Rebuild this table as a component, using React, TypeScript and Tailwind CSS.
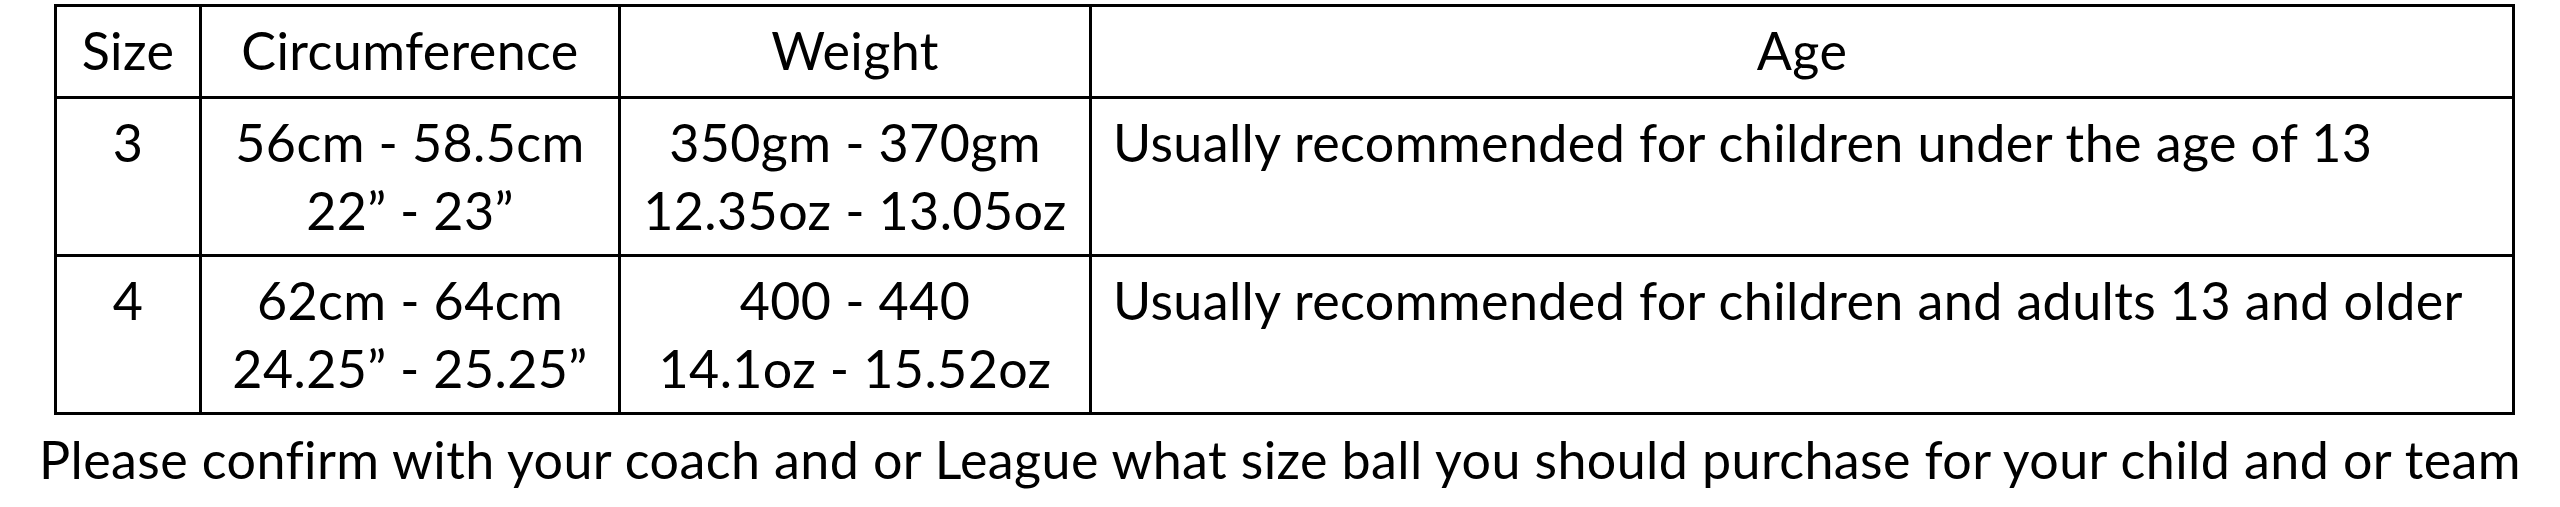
const font = { fontFamily: "Lato, 'Open Sans', sans-serif" };

interface SizeRow {
  size: string;
  circumference: string[];
  weight: string[];
  age: string;
}

const rows: SizeRow[] = [
  {
    size: "3",
    circumference: ["56cm - 58.5cm", "22” - 23”"],
    weight: ["350gm - 370gm", "12.35oz - 13.05oz"],
    age: "Usually recommended for children under the age of 13",
  },
  {
    size: "4",
    circumference: ["62cm - 64cm", "24.25” - 25.25”"],
    weight: ["400 - 440", "14.1oz - 15.52oz"],
    age: "Usually recommended for children and adults 13 and older",
  },
];

// column tracks include the 3px left rule of every cell after the first
const cols = "grid grid-cols-[142px_419px_471px_1423px]";

export default function App() {
  return (
    <div
      className="min-h-screen bg-white text-black font-['Lato',sans-serif]"
      style={font}
    >
      <div className="pl-[54px] pt-[4px]">
        <div className="w-[2461px] border-[3px] border-black text-[52px] leading-[68px] tracking-[0.4px]">
          {/* header */}
          <div className={`${cols} h-[89px]`}>
            <div className="pt-[9px] text-center">Size</div>
            <div className="border-l-[3px] border-black pt-[9px] text-center">Circumference</div>
            <div className="border-l-[3px] border-black pt-[9px] text-center">Weight</div>
            <div className="border-l-[3px] border-black pt-[9px] text-center">Age</div>
          </div>

          {rows.map((row) => (
            <div key={row.size} className={`${cols} h-[158px] border-t-[3px] border-black`}>
              <div className="pt-[9px] text-center">{row.size}</div>
              <div className="border-l-[3px] border-black pt-[9px] text-center">
                {row.circumference.map((line) => (
                  <div key={line}>{line}</div>
                ))}
              </div>
              <div className="border-l-[3px] border-black pt-[9px] text-center">
                {row.weight.map((line) => (
                  <div key={line}>{line}</div>
                ))}
              </div>
              <div className="border-l-[3px] border-black pt-[9px] pl-[21px]">{row.age}</div>
            </div>
          ))}
        </div>
      </div>

      <p className="mt-[10px] whitespace-nowrap text-center text-[52px] leading-[68px] tracking-[0.4px]">
        Please confirm with your coach and or League what size ball you should purchase for your child and or team
      </p>
    </div>
  );
}
